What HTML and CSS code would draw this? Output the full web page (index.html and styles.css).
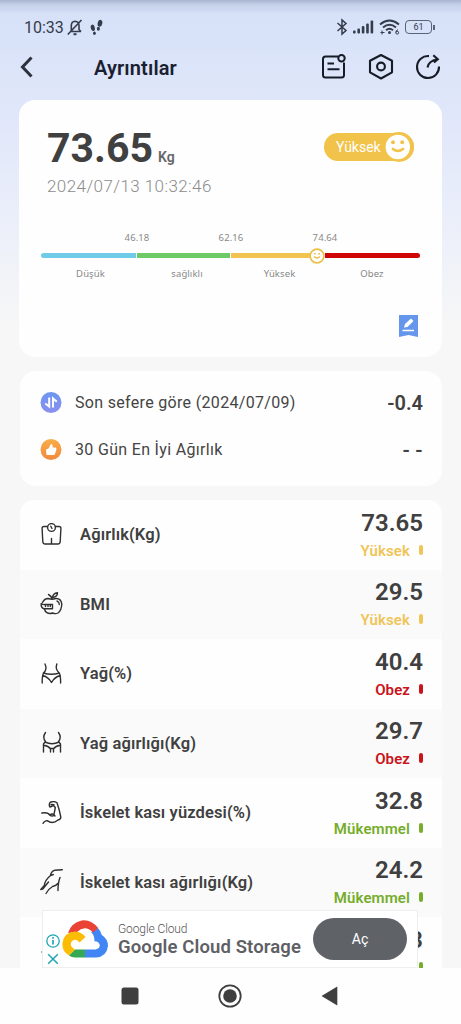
FILE: index.html
```html
<!DOCTYPE html>
<html lang="tr">
<head>
<meta charset="utf-8">
<meta name="viewport" content="width=device-width">
<title>Ayrıntılar</title>
<link rel="stylesheet" href="styles.css">
</head>
<body>
<div class="screen">
  <div class="status">
    <span class="clock">10:33</span>
    <svg class="bell" width="16" height="17" viewBox="0 0 16 17" fill="none" stroke="#343c4b" stroke-width="1.6"><path d="M3 12.500h11M4.300 12V6.500Q4.500 2.500 8 2.300Q11.800 2.500 12 6.500V10.500L14 12.500M.8 15.500L14.500 1"/><path d="M6.500 15.200h3" stroke-width="2"/></svg>
    <svg class="steps" width="14" height="17" viewBox="0 0 14 17" fill="#343c4b"><ellipse cx="2.800" cy="8.800" rx="2" ry="3.200" transform="rotate(-12 2.800 8.800)"/><ellipse cx="4.400" cy="14.200" rx="1.400" ry="1.800"/><ellipse cx="10" cy="4.300" rx="2.300" ry="3.500" transform="rotate(12 10 4.300)"/><ellipse cx="8.400" cy="9.800" rx="1.500" ry="2"/></svg>
    <span class="grow"></span>
    <svg width="12" height="18" viewBox="0 0 12 18" fill="none" stroke="#343c4b" stroke-width="1.500"><path d="M1.500 5L10 12.500L6 16V2L10 5.500L1.500 13"/></svg>
    <svg class="signal" width="21" height="14" viewBox="0 0 21 14" fill="#343c4b"><rect y="10.500" width="2.600" height="3" rx="1"/><rect x="4.400" y="8.500" width="2.600" height="5" rx="1"/><rect x="8.800" y="6" width="2.600" height="7.500" rx="1"/><rect x="13.200" y="3.500" width="2.600" height="10" rx="1"/><rect x="17.600" y=".5" width="2.600" height="13" rx="1"/></svg>
    <svg class="wifi" width="21" height="16" viewBox="0 0 21 16" fill="none" stroke="#343c4b" stroke-width="1.900"><path d="M1 5.500Q10.500-2.300 20 5.500M4 8.500Q10.500 3 17 8.500M7 11.300Q10.500 8.300 14 11.300"/><circle cx="10.500" cy="13.500" r="1.500" fill="#343c4b" stroke="none"/><path d="M1.500 13.500h4M3 11.500v4" stroke-width="1"/><path d="M19 10.800Q17 11 16.800 13.500" stroke-width="1"/><circle cx="18.200" cy="13.700" r="1.400" stroke-width="1"/></svg>
    <span class="battery">61</span><i class="battery-tip"></i>
  </div>

  <header class="bar">
    <svg class="back" width="14" height="22" viewBox="0 0 14 22" fill="none" stroke="#2c313c" stroke-width="3"><path d="M11.500 1.500L2.500 11L11.500 20.500"/></svg>
    <h1>Ayrıntılar</h1>
    <svg width="26" height="26" viewBox="0 0 26 26" fill="none" stroke="#171b25" stroke-width="2"><path d="M17 2.500H4.500Q2 2.500 2 5V21Q2 23.500 4.500 23.500H20.500Q23 23.500 23 21V8.500M6.500 9.500h6.500M6.500 15.300h12"/><circle cx="20.500" cy="4.300" r="3.200"/></svg>
    <svg width="26" height="28" viewBox="0 0 26 28" fill="none" stroke="#171b25" stroke-width="2.100" stroke-linejoin="round"><path d="M13 2L24 7.700V19.300L13 25.500L2 19.300V7.700Z"/><circle cx="13" cy="13.500" r="3.900"/></svg>
    <svg width="26" height="26" viewBox="0 0 26 26" fill="none" stroke="#171b25" stroke-width="2.100"><path d="M14 2.100A11 11 0 1 0 24 12.500M12.500 13.500Q13.500 7 22.500 5.300M18.300 1.300L22.800 5.300L19 8.500"/></svg>
  </header>

  <section class="card summary">
    <div class="top">
      <div>
        <div class="weight"><span class="num">73.65</span><span class="unit">Kg</span></div>
        <div class="date">2024/07/13 10:32:46</div>
      </div>
      <div class="pill"><span>Yüksek</span>
        <svg width="30" height="30" viewBox="0 0 30 30"><circle cx="15" cy="15" r="15" fill="#f1c34a"/><circle cx="13.800" cy="15" r="12.200" fill="#fff"/><circle cx="9" cy="10.300" r="2" fill="#f1c34a"/><circle cx="18.200" cy="10.300" r="2" fill="#f1c34a"/><path d="M9 17Q14 20.800 19 17" fill="none" stroke="#f1c34a" stroke-width="2.800" stroke-linecap="round"/></svg>
      </div>
    </div>
    <div class="limits"><span>46.18</span><span>62.16</span><span>74.64</span></div>
    <div class="scale">
      <i class="low"></i><i class="ok"></i><i class="high"></i><i class="obese"></i>
      <svg class="marker" width="16" height="16" viewBox="0 0 16 16" fill="none" stroke="#e9c045"><circle cx="8" cy="8" r="6.900" fill="#fff" stroke-width="1.600"/><path d="M5 8.500Q8 11.500 11 8.500" stroke-width="1.400"/><path d="M5 5.700h1.600M9.400 5.700H11" stroke-width="1.500"/></svg>
    </div>
    <div class="zones"><span>Düşük</span><span>sağlıklı</span><span>Yüksek</span><span>Obez</span></div>
    <svg class="note" width="19" height="23" viewBox="0 0 19 23"><path d="M0 0H19V22L9.500 20L0 22Z" fill="#6497ec"/><path d="M5 12.500L6 9L12 3.500L14.500 6L8.500 12Z" fill="#fff"/><path d="M3.500 15.500H15" stroke="#fff" stroke-width="1.500"/></svg>
  </section>

  <section class="card compare">
    <div class="line">
      <svg width="22" height="22" viewBox="0 0 22 22"><defs><linearGradient id="b" x2="0" y2="1"><stop stop-color="#6c96ef"/><stop offset="1" stop-color="#8b8ff0"/></linearGradient></defs><circle cx="11" cy="10.500" r="10.500" fill="url(#b)"/><path d="M9.200 5.500V14.500L5.300 11.500M13 15.500V6.500L16.800 9.800" fill="none" stroke="#fff" stroke-width="2"/></svg>
      <span>Son sefere göre (2024/07/09)</span><b>-0.4</b>
    </div>
    <div class="line">
      <svg width="22" height="22" viewBox="0 0 22 22"><defs><linearGradient id="o" x2="0" y2="1"><stop stop-color="#f8ae4c"/><stop offset="1" stop-color="#f1893a"/></linearGradient></defs><circle cx="11" cy="10.500" r="10.500" fill="url(#o)"/><path d="M6 10.500L8.500 9.500L11 5Q13.200 5.200 12.500 8.500H15.500Q17 9 16.300 11L15 15Q14.500 16 13 16H6.500Z" fill="#fff"/></svg>
      <span class="best">30 Gün En İyi Ağırlık</span><b class="none">- -</b>
    </div>
  </section>

  <section class="list">
    <div class="row yellow">
      <svg width="24" height="24" viewBox="0 0 24 24"><path d="M7.500 3.500H4Q2 3.500 2.100 5.500L2.800 18.500Q3 21 5 21H18Q20 21 20.200 18.500L20.900 5.500Q21 3.500 19 3.500H15.500M11.500 15.500V20.500"/><circle cx="11.500" cy="4.500" r="3.900"/><path d="M10.800 3.200L12 5.500"/></svg>
      <span class="name">Ağırlık(Kg)</span><div class="val"><b>73.65</b><em>Yüksek</em></div>
    </div>
    <div class="row yellow">
      <svg width="24" height="24" viewBox="0 0 24 24"><path d="M2.500 10.500Q4.500 6.500 8 6.500Q12.500 8 15.500 6.500Q21 6 21.800 12Q21.500 18.500 18 21Q15.500 22.300 12.500 21Q9.500 22.300 6.500 20.300Q5 19.500 4.500 17M12 7Q11.500 4 8.500 2.500M12.500 5.500Q13 1.500 17.500 .8Q17.500 5 12.500 5.500M17 9Q19.300 10 19.300 12.500"/><path d="M1.200 11.500Q3 13 5 12.500H12.500V16.800H4Q.8 16 1.200 11.500ZM5.500 13V14.500M8 13V14.500M10.300 13V14.500"/></svg>
      <span class="name">BMI</span><div class="val"><b>29.5</b><em>Yüksek</em></div>
    </div>
    <div class="row red">
      <svg width="24" height="24" viewBox="0 0 24 24"><path d="M5 2Q7.500 7.500 3.500 11Q2 14.500 2.200 21M16.800 2Q15 7.500 19.300 11Q20.800 14.500 20.600 21M3.300 11Q11.500 13.500 19.300 11M2.800 13.500Q8.500 15 11.500 20.500Q14.500 15 20.300 13.500"/></svg>
      <span class="name">Yağ(%)</span><div class="val"><b>40.4</b><em>Obez</em></div>
    </div>
    <div class="row red">
      <svg width="24" height="24" viewBox="0 0 24 24"><path d="M5.500 1.500Q2 6.500 5.500 10.500L3.500 13V21M18.500 1.500Q22 6.500 18.500 10.500L20.500 13V21M5 11Q12 14.500 19 11M3.800 14.300Q8.500 15 10.500 17.800V21M20.200 14.300Q15.500 15 13.500 17.800V21M10.500 17.500H13.500"/></svg>
      <span class="name">Yağ ağırlığı(Kg)</span><div class="val"><b>29.7</b><em>Obez</em></div>
    </div>
    <div class="row green">
      <svg width="24" height="24" viewBox="0 0 24 24"><path d="M1.800 12Q8 10.800 9.800 14.200Q12.500 11.500 15 15M9.800 14.200Q12 15.500 13.800 14.500L15.300 6.500L13.500 4.500L10 6Q8.500 4 10 1.500Q14-.5 17 1.800Q19.500 9 20.800 16Q21 18.500 18 19Q14 22.500 9.500 21Q5.500 18 3 22.300M11 3.500L14 3.800"/></svg>
      <span class="name">İskelet kası yüzdesi(%)</span><div class="val"><b>32.8</b><em>Mükemmel</em></div>
    </div>
    <div class="row green">
      <svg width="24" height="26" viewBox="0 0 24 26"><path d="M22.300 .8L14.500 1.300Q10.800 2.500 10.500 6.500Q5 11 4.300 16.500L.8 20.500L3 19.800L8.500 13M10.500 6.500L13.300 5.500M20 8.500Q18 13.500 18 21.500M17.800 14.500Q16 17 12.500 17.500Q9 19.500 6 24.500"/></svg>
      <span class="name">İskelet kası ağırlığı(Kg)</span><div class="val"><b>24.2</b><em>Mükemmel</em></div>
    </div>
    <div class="row green">
      <svg width="24" height="24" viewBox="0 0 24 24"><path d="M2 12h.2"/></svg>
      <span class="name"></span><div class="val"><b>3</b><em></em></div>
    </div>
  </section>

  <aside class="ad">
    <div class="choices">
      <svg width="14" height="14" viewBox="0 0 14 14" fill="none" stroke="#20a5b5" stroke-width="1.300"><circle cx="7" cy="7" r="6.200"/><path d="M7 6V10.500M7 3V4.700" stroke-width="1.700"/></svg>
      <svg width="12" height="12" viewBox="0 0 12 12" fill="none" stroke="#20a5b5" stroke-width="1.500"><path d="M1.200 1.200L10.800 10.800M10.800 1.200L1.200 10.800"/></svg>
    </div>
    <svg class="cloud" width="46" height="38" viewBox="0 0 46 38"><path d="M30.500 11.500L35 7Q39 11 39.800 15Q46 19 46 26Q44.500 37 34 37.500H23V29.500H33.500Q38 28.500 37.800 25Q37 21.500 32.500 21.200Q32.500 15 29 12Z" fill="#4285f4"/><path d="M6 13Q9 3 19.500.5Q29-1 36 8L31 12.500Q23 4.500 15 12Z" fill="#ea4335"/><path d="M7 35.500L13 29.500H23V37.500H13Q9.500 37.500 7 35.500Z" fill="#34a853"/><path d="M7 35.500Q-.5 31 .5 22.500Q2 12.500 13 11.500Q20 12 23.500 17L17.500 22.500Q14.500 18 10 21Q6.500 26 13 29.500Z" fill="#fbbc05"/></svg>
    <div class="adtext"><span class="brand">Google Cloud</span><span class="title">Google Cloud Storage</span></div>
    <div class="open">Aç</div>
  </aside>

  <nav class="nav">
    <svg width="18" height="18" viewBox="0 0 18 18"><rect x=".5" y=".5" width="17" height="17" rx="2.500" fill="#3f3f3f"/></svg>
    <svg width="24" height="24" viewBox="0 0 24 24"><circle cx="12" cy="12" r="10.700" fill="none" stroke="#3f3f3f" stroke-width="1.800"/><circle cx="12" cy="12" r="6.800" fill="#3f3f3f"/></svg>
    <svg width="17" height="20" viewBox="0 0 17 20"><path d="M16.300 .5V19.500L.5 10Z" fill="#3f3f3f"/></svg>
  </nav>
</div>
</body>
</html>
```
FILE: styles.css
```css
* { box-sizing: border-box; }
body { margin: 0; font-family: Roboto, "Noto Sans", sans-serif; color: #404040; }
svg { display: block; flex: none; }
i, em { font-style: normal; }
span, b, em, h1 { white-space: nowrap; }
.screen {
  position: relative; width: 461px; height: 1024px; overflow: hidden;
  display: flex; flex-direction: column;
  background:
    linear-gradient(#a9b4cf 0, rgba(185, 197, 224, .55) 5px, rgba(200, 212, 236, .4) 11px, transparent 13px),
    linear-gradient(#d5e0f7 0, #dbe4f9 60px, #e4e9fa 150px, #eaeefa 210px, #f7f7f7 330px);
}
.status { height: 44px; padding: 10px 26px 0 24px; display: flex; align-items: center; }
.clock { font-size: 16px; width: 43px; color: #343c4b; }
.steps { margin-left: 7px; }
.grow { flex: 1; }
.signal { margin-left: 5px; }
.wifi { margin-left: 5px; }
.battery {
  width: 27px; height: 14px; margin-left: 5px; border: 1.5px solid #596276; border-radius: 4px;
  font-size: 9px; line-height: 12px; text-align: center; color: #343c4b;
}
.battery-tip { width: 2px; height: 5px; margin-left: 1px; background: #596276; }
.bar { height: 46px; padding: 0 20px; display: flex; align-items: center; gap: 21px; }
.back { margin-right: 39px; }
.bar h1 { flex: 1; margin: 0; padding-top: 1px; font-size: 20px; line-height: 24px; font-weight: 600; color: #1b2030; letter-spacing: .12px; }
.card { background: #fefefe; border-radius: 16px; flex: none; }
.summary { margin: 10px 19px 0; height: 257px; padding: 24px 22px 0; display: flex; flex-direction: column; }
.top { display: flex; justify-content: space-between; padding: 0 6px; }
.weight { display: flex; align-items: baseline; gap: 5px; height: 50px; }
.num { font-size: 41px; line-height: 48px; font-weight: 700; }
.unit { font-size: 14px; font-weight: 600; color: #666; }
.date { font-size: 17px; line-height: 25px; color: #8c8c8c; font-weight: 300; letter-spacing: .42px; }
.pill { width: 90px; height: 28px; margin-top: 9px; border-radius: 14px; background: #f1c34a; color: #fff; font-size: 14px; display: flex; align-items: center; justify-content: space-between; padding-left: 12px; }
.limits, .zones { display: flex; font-family: "Noto Sans", sans-serif; font-size: 9.5px; line-height: 14px; color: #888; letter-spacing: .1px; }
.limits { margin: 32px 48px 0 49px; }
.limits span { width: 94px; flex: none; text-align: center; }
.scale { position: relative; display: grid; grid-template-columns: 95px 93px 93px 95px; gap: 1px; margin-top: 8px; height: 5px; }
.scale i:first-child { border-radius: 3px 0 0 3px; }
.scale i:nth-child(4) { border-radius: 0 3px 3px 0; }
.low { background: #6fcbe8; } .ok { background: #6dca67; } .high { background: #f1c452; } .obese { background: #cf0505; }
.marker { position: absolute; left: 268px; top: -5px; }
.zones { margin-top: 9px; }
.zones span { flex: 0 0 94px; text-align: center; }
.zones span:first-child { flex: 0 0 99px; }
.zones span:nth-child(3) { flex-basis: 91px; }
.note { align-self: flex-end; margin: 34px 2px 0 0; }
.compare { margin: 14px 19px 0 20px; height: 115px; padding: 8px 19px 0 20px; }
.line { display: flex; align-items: center; height: 47px; }
.line span { flex: 1; margin-left: 13px; font-size: 16px; color: #444; letter-spacing: .32px; }
.line b { font-size: 20px; font-weight: 600; }
.line .none { letter-spacing: .3px; }
.list { flex: 1; min-height: 0; overflow: hidden; margin: 14px 19px 0 20px; border-radius: 14px 14px 0 0; background: #fefefe; }
.row { display: flex; align-items: center; height: 69.5px; padding: 0 19px 0 20px; }
.row:nth-child(even) { background: #fafafa; }
.row > svg { fill: none; stroke: #303030; stroke-width: 1.4; stroke-linecap: round; stroke-linejoin: round; }
.name { flex: 1; margin-left: 16px; font-size: 16.5px; font-weight: 600; letter-spacing: .12px; }
.val { display: flex; flex-direction: column; align-items: flex-end; padding-top: 4px; }
.val b { font-size: 24px; line-height: 28px; font-weight: 600; }
.val em { display: flex; align-items: center; height: 28px; font-size: 15px; font-weight: 600; letter-spacing: .1px; color: var(--tone); }
.val em::after { content: ""; width: 4px; height: 10px; border-radius: 2px; background: var(--tone); margin: -2px 0 0 9px; }
.yellow { --tone: #efc557; } .red { --tone: #c9141a; } .green { --tone: #76ad2c; }
.ad { position: absolute; left: 42px; top: 910px; width: 376px; height: 58px; background: #fff; border: 1px solid #eee; display: flex; align-items: center; }
.choices { width: 19px; display: flex; flex-direction: column; align-items: center; gap: 5px; padding-top: 20px; }
.adtext { flex: 1; display: flex; flex-direction: column; margin-left: 10px; }
.brand { font-size: 12px; line-height: 16px; font-weight: 300; color: #555; letter-spacing: -.1px; }
.title { font-size: 18.5px; line-height: 21px; font-weight: 600; color: #5f6065; letter-spacing: .12px; }
.open { width: 94px; height: 42px; margin-right: 10px; border-radius: 21px; background: #5f6368; color: #fff; font-size: 14px; line-height: 42px; text-align: center; }
.nav { height: 56px; flex: none; background: #fefefe; display: flex; align-items: center; justify-content: space-between; padding: 0 123px 0 121px; }
```
